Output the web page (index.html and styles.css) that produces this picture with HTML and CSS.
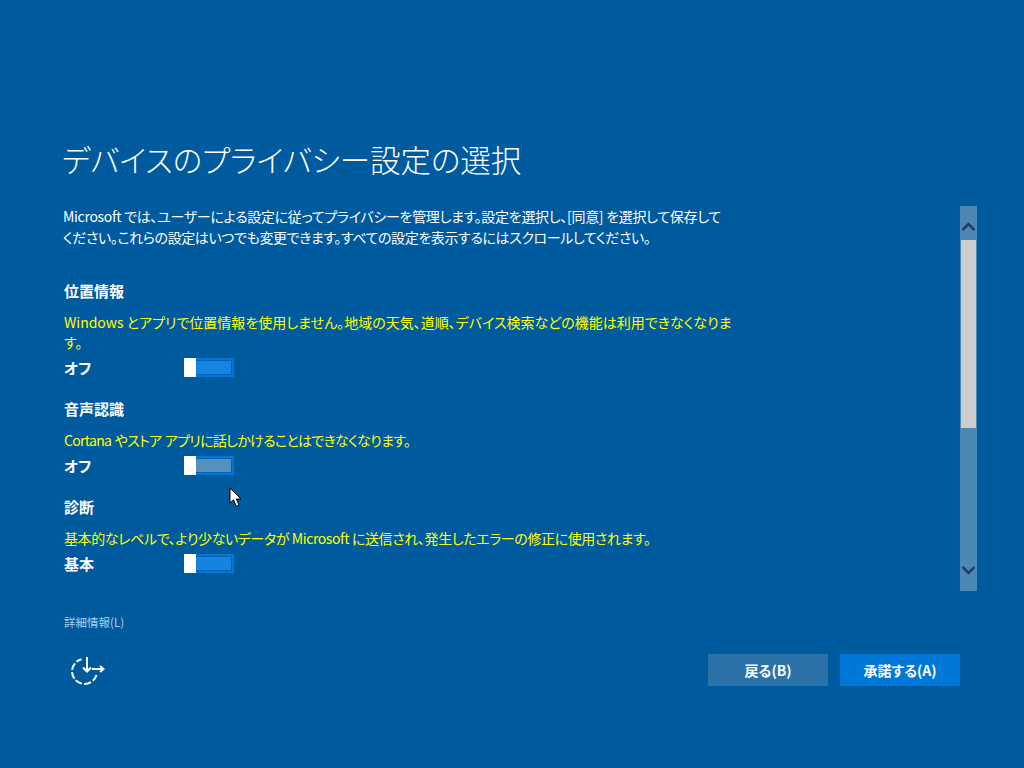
FILE: index.html
```html
<!DOCTYPE html>
<html lang="ja">
<head>
<meta charset="utf-8">
<title>デバイスのプライバシー設定の選択</title>
<link rel="stylesheet" href="styles.css">
</head>
<body>
<main class="page">
  <h1 class="title">デバイスのプライバシー設定の選択</h1>
  <div class="pane">
    <div class="content">
      <div class="intro">
        <p class="line fit-a">Microsoft では、ユーザーによる設定に従ってプライバシーを管理します。設定を選択し、[同意] を選択して保存して</p>
        <p class="line fit-b">ください。これらの設定はいつでも変更できます。すべての設定を表示するにはスクロールしてください。</p>
      </div>
      <section class="setting first">
        <h2 class="heading">位置情報</h2>
        <p class="note">Windows とアプリで位置情報を使用しません。地域の天気、道順、デバイス検索などの機能は利用できなくなりま<br>す。</p>
        <div class="row"><span class="state">オフ</span><span class="toggle"><span class="knob"></span><span class="fill"></span></span></div>
      </section>
      <section class="setting">
        <h2 class="heading">音声認識</h2>
        <p class="note fit-c">Cortana やストア アプリに話しかけることはできなくなります。</p>
        <div class="row"><span class="state">オフ</span><span class="toggle"><span class="knob"></span><span class="fill hover"></span></span></div>
      </section>
      <section class="setting">
        <h2 class="heading">診断</h2>
        <p class="note fit-b">基本的なレベルで、より少ないデータが Microsoft に送信され、発生したエラーの修正に使用されます。</p>
        <div class="row"><span class="state">基本</span><span class="toggle"><span class="knob"></span><span class="fill"></span></span></div>
      </section>
    </div>
    <div class="scrollbar">
      <svg class="arrow" width="17" height="34" viewBox="0 0 17 34"><path d="M2.5 24 L8.5 18 L14.5 24" fill="none" stroke="#1f3f66" stroke-width="2.5"/></svg>
      <div class="thumb"></div>
      <div class="rest"></div>
      <svg class="arrow" width="17" height="34" viewBox="0 0 17 34"><path d="M2.5 10 L8.5 16 L14.5 10" fill="none" stroke="#1f3f66" stroke-width="2.5"/></svg>
    </div>
  </div>
  <a class="more">詳細情報(L)</a>
  <footer class="footer">
    <svg class="access" width="34" height="30" viewBox="0 0 34 30">
      <path d="M25.5 20 A12.5 12.5 0 1 1 10.5 4.3" fill="none" stroke="#fff" stroke-width="2" stroke-dasharray="7 2.2"/>
      <path d="M16 2 V16 M12 12.5 L16 16.5 L20 12.5 M21 14 H32 M29 11 L32.5 14 L29 17" fill="none" stroke="#fff" stroke-width="2"/>
    </svg>
    <div class="buttons">
      <button class="btn back">戻る(B)</button>
      <button class="btn accept">承諾する(A)</button>
    </div>
  </footer>
</main>
<svg class="cursor" width="15" height="21" viewBox="0 0 15 21"><path d="M1 1 V16 L4.5 12.8 L7.3 19.3 L10 18 L7.3 12 H12 Z" fill="#fff" stroke="#000" stroke-width="1"/></svg>
</body>
</html>
```
FILE: styles.css
```css
* { box-sizing: border-box; }
html, body { margin: 0; height: 100%; }
body {
  background: #005a9e;
  color: #fff;
  font-family: "Noto Sans CJK JP", "Open Sans", sans-serif;
  font-feature-settings: "palt";
  overflow: hidden;
  position: relative;
}
.page { width: 1024px; height: 768px; padding: 136px 0 0 64px; display: flex; flex-direction: column; }
.title { margin: 0 0 0 -2px; font-size: 30.5px; font-weight: 300; line-height: 46px; height: 70px; }
.pane { display: flex; height: 385px; width: 913px; justify-content: space-between; }
.content { width: 690px; }
.intro { margin: 0 0 0 -1px; font-size: 14px; }
.line { margin: 0; height: 21px; line-height: 21px; white-space: nowrap; }
.fit-a { letter-spacing: -0.3px; }
.fit-b { letter-spacing: -0.4px; }
.fit-c { letter-spacing: -0.7px; word-spacing: 1px; }
.setting { margin-top: 21px; }
.setting.first { margin-top: 33px; }
.heading { margin: 0; height: 20px; font-size: 15px; font-weight: 700; line-height: 20px; }
.note { margin: 11px 0 0; font-size: 14px; line-height: 20px; color: #ffff00; white-space: nowrap; }
.row { display: flex; align-items: center; height: 21px; margin-top: 5px; }
.state { width: 120px; font-size: 15px; font-weight: 700; }
.toggle { display: flex; width: 50px; height: 19px; }
.knob { width: 12px; background: #fff; }
.fill { flex: 1; border: 2px solid #0078d7; border-left: 0; background: #1583e0; box-shadow: inset -1px 0 #0062b0, inset 0 1px #0062b0, inset 0 -1px #0062b0; }
.fill.hover { background: #5590bc; }
.scrollbar { width: 17px; height: 385px; background: #4d88b5; display: flex; flex-direction: column; }
.arrow { display: block; flex: none; }
.thumb { height: 188px; margin: 0 1px; background: #cdcdcd; flex: none; }
.rest { flex: 1; }
.more { margin-top: 22px; font-size: 11.5px; line-height: 18px; color: #a6d0f0; }
.footer { display: flex; justify-content: space-between; align-items: flex-start; width: 896px; margin-top: 23px; }
.access { margin: 1px 0 0 7px; }
.buttons { display: flex; gap: 12px; }
.btn { width: 120px; height: 32px; border: 0; padding: 0; color: #fff; font: inherit; font-size: 14px; font-weight: 700; }
.back { background: #2b72a8; }
.accept { background: #0078d7; }
.cursor { position: absolute; left: 229px; top: 487px; }
```
